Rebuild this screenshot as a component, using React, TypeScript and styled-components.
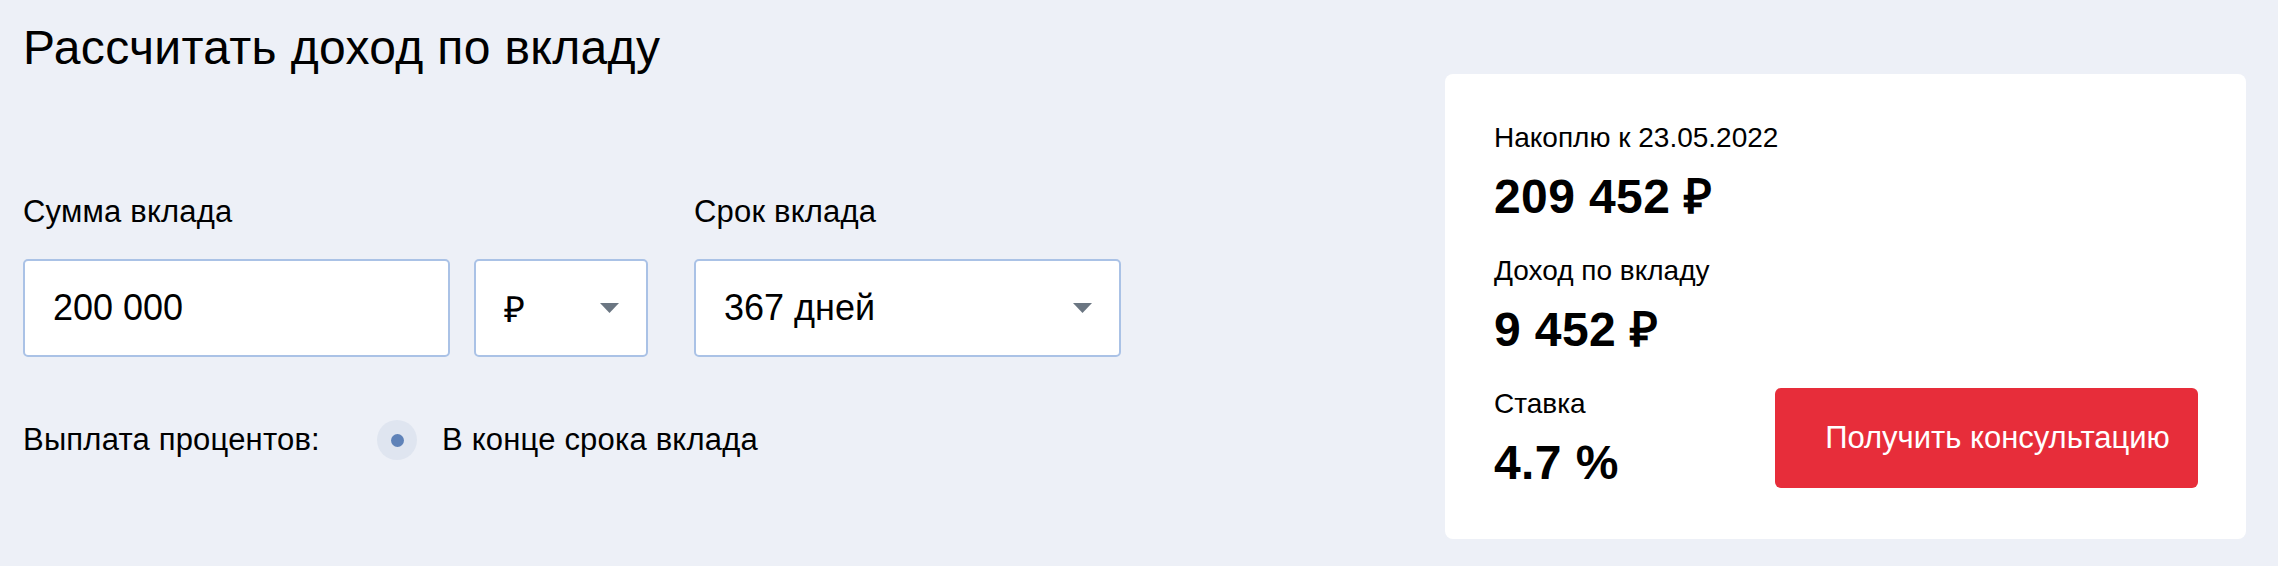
import styled, {createGlobalStyle} from 'styled-components';

const GlobalStyle = createGlobalStyle`
  * {
    box-sizing: border-box;
  }
  body {
    margin: 0;
    background: #edf0f7;
    font-family: 'Liberation Sans', Arial, sans-serif;
    color: #000;
  }
`;

const Page = styled.div`
  display: grid;
  grid-template-columns: 1fr 801px;
  align-items: start;
  height: 566px;
  padding: 20px 32px 0 23px;
`;

const Calculator = styled.section`
  display: flex;
  flex-direction: column;
`;

const Title = styled.h1`
  margin: 0;
  font-size: 48px;
  line-height: 55px;
  font-weight: 400;
  letter-spacing: 0.35px;
`;

const Fields = styled.div`
  display: flex;
  gap: 46px;
  margin-top: 120px;
`;

const Field = styled.div`
  display: flex;
  flex-direction: column;
`;

const FieldLabel = styled.label`
  font-size: 31px;
  line-height: 34px;
  letter-spacing: 0.2px;
  margin-bottom: 30px;
`;

const Controls = styled.div`
  display: flex;
  gap: 24px;
`;

const Box = styled.div<{$width: number}>`
  display: flex;
  align-items: center;
  justify-content: space-between;
  width: ${(p) => p.$width}px;
  height: 98px;
  padding: 0 27px 0 28px;
  background: #fff;
  border: 2px solid #aac2e6;
  border-radius: 5px;
  font-size: 36px;
`;

const Payout = styled.div`
  display: flex;
  align-items: center;
  margin-top: 63px;
  font-size: 31px;
  line-height: 34px;
  letter-spacing: 0.2px;
`;

const PayoutLabel = styled.span`
  width: 354px;
`;

const Radio = styled.span`
  display: flex;
  align-items: center;
  justify-content: center;
  width: 40px;
  height: 40px;
  margin-right: 25px;
  border-radius: 50%;
  background: #dfe5f0;

  &::after {
    content: '';
    width: 13px;
    height: 13px;
    border-radius: 50%;
    background: #5f82b8;
  }
`;

const Card = styled.aside`
  display: flex;
  flex-direction: column;
  gap: 30px;
  margin-top: 54px;
  padding: 48px 48px 48px 49px;
  background: #fff;
  border-radius: 8px;
`;

const CardRow = styled.div`
  display: flex;
  justify-content: space-between;
  align-items: flex-start;
`;

const Stat = styled.div`
  display: flex;
  flex-direction: column;
`;

const StatLabel = styled.span`
  font-size: 28px;
  line-height: 32px;
`;

const StatValue = styled.span`
  margin-top: 15px;
  font-size: 48px;
  line-height: 56px;
  font-weight: 700;
  letter-spacing: 0.4px;
`;

const ConsultButton = styled.button`
  width: 423px;
  height: 100px;
  padding: 0 0 0 22px;
  border: none;
  border-radius: 6px;
  background: #e72d3a;
  color: #fff;
  font-family: inherit;
  font-size: 31px;
  cursor: pointer;
`;

const Caret = () => (
  <svg width="19" height="10" viewBox="0 0 19 10">
    <path d="M0 0h19L9.5 10z" fill="#6b7682" />
  </svg>
);

export default function App() {
  return (
    <>
      <GlobalStyle />
      <Page>
        <Calculator>
          <Title>Рассчитать доход по вкладу</Title>
          <Fields>
            <Field>
              <FieldLabel>Сумма вклада</FieldLabel>
              <Controls>
                <Box $width={427}>200 000</Box>
                <Box $width={174}>
                  ₽
                  <Caret />
                </Box>
              </Controls>
            </Field>
            <Field>
              <FieldLabel>Срок вклада</FieldLabel>
              <Box $width={427}>
                367 дней
                <Caret />
              </Box>
            </Field>
          </Fields>
          <Payout>
            <PayoutLabel>Выплата процентов:</PayoutLabel>
            <Radio />
            В конце срока вклада
          </Payout>
        </Calculator>

        <Card>
          <Stat>
            <StatLabel>Накоплю к 23.05.2022</StatLabel>
            <StatValue>209 452 ₽</StatValue>
          </Stat>
          <Stat>
            <StatLabel>Доход по вкладу</StatLabel>
            <StatValue>9 452 ₽</StatValue>
          </Stat>
          <CardRow>
            <Stat>
              <StatLabel>Ставка</StatLabel>
              <StatValue>4.7 %</StatValue>
            </Stat>
            <ConsultButton>Получить консультацию</ConsultButton>
          </CardRow>
        </Card>
      </Page>
    </>
  );
}
